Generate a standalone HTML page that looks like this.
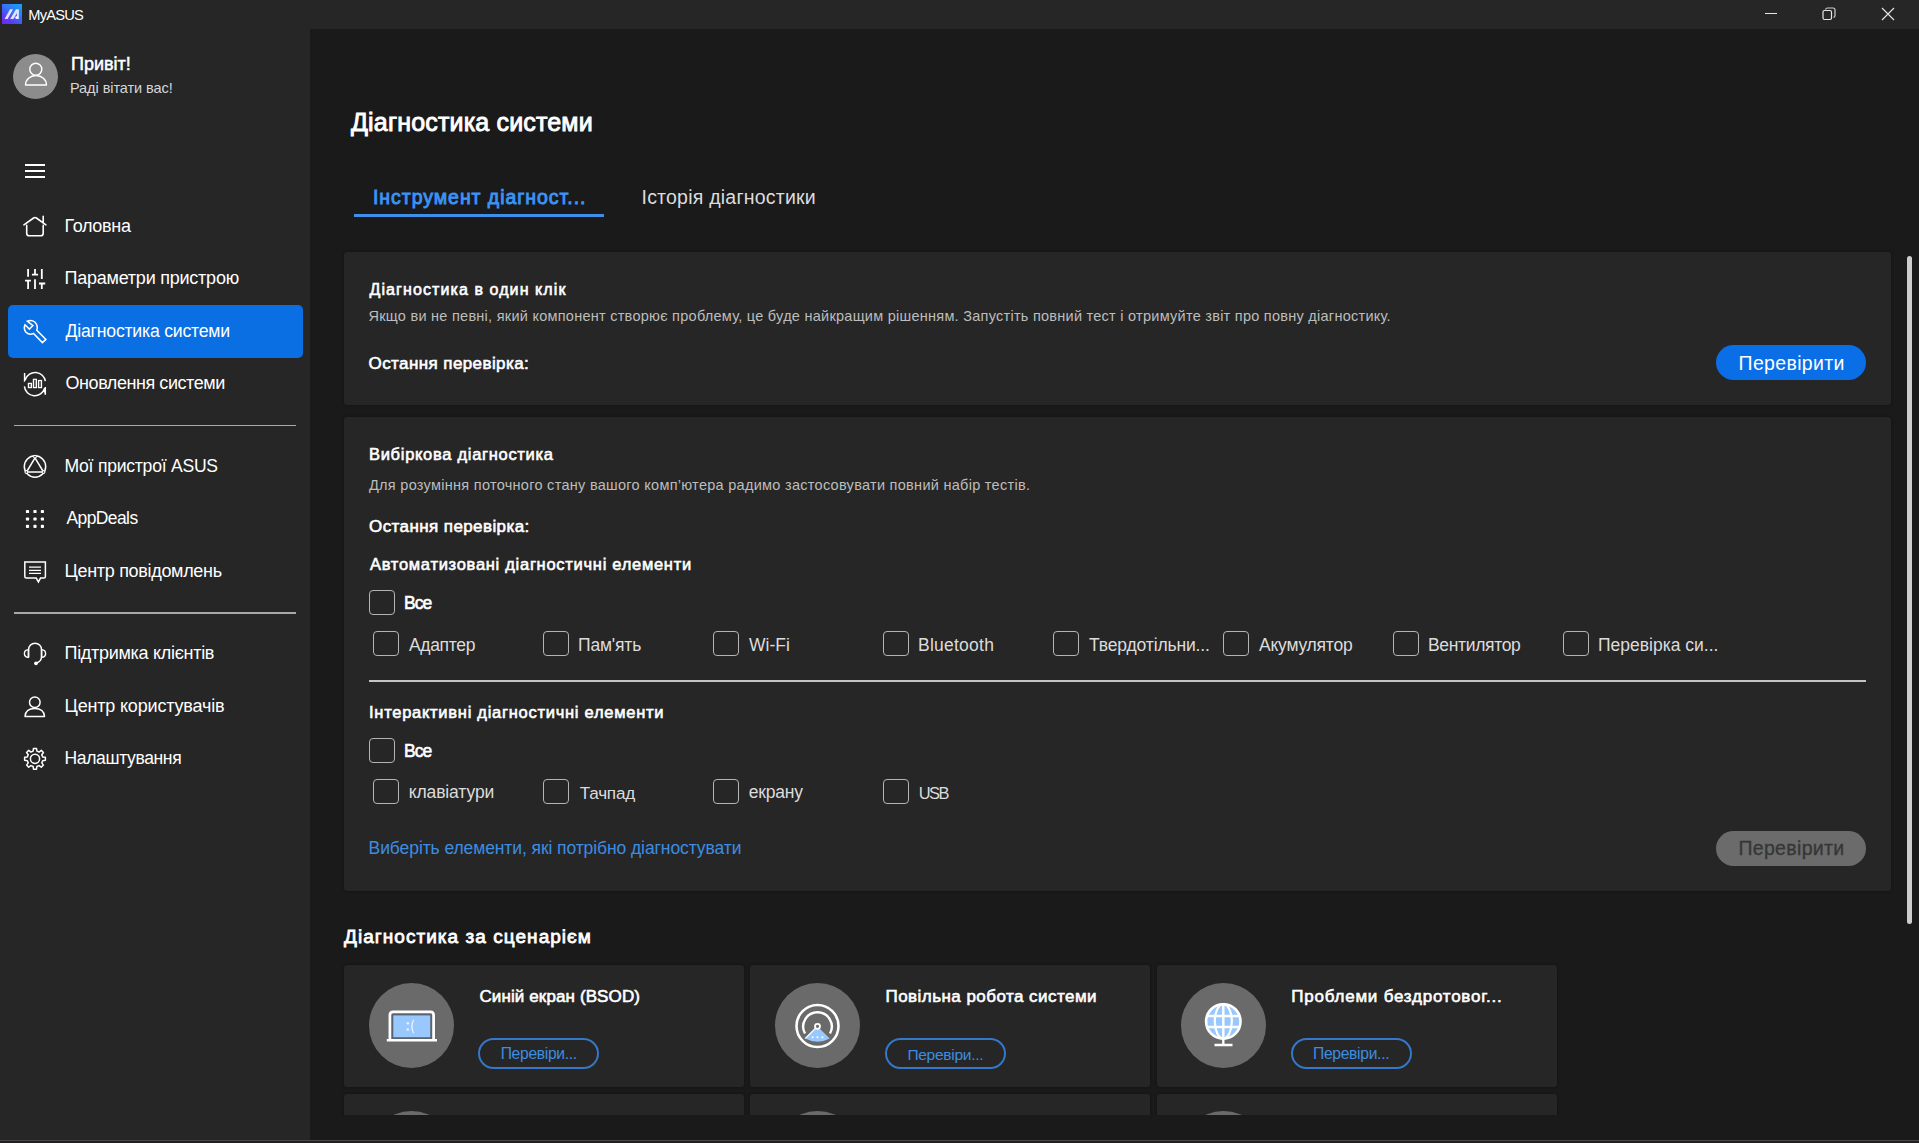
<!DOCTYPE html>
<html><head><meta charset="utf-8">
<style>
*{margin:0;padding:0;box-sizing:border-box}
html,body{width:1919px;height:1143px;overflow:hidden;background:#1a1a1a;font-family:"Liberation Sans",sans-serif}
.a{position:absolute}
.t{position:absolute;white-space:nowrap}
#titlebar{left:0;top:0;width:1919px;height:29px;background:#262626}
#sidebar{left:0;top:29px;width:310px;height:1111px;background:#262626}
#main{left:310px;top:29px;width:1609px;height:1111px;background:#1a1a1a}
#bottomline{left:0;top:1140px;width:1919px;height:1px;background:#484848}
#bottomdark{left:0;top:1141px;width:1919px;height:2px;background:#231f21}
.card{position:absolute;background:#262626;border-radius:3px;box-shadow:0 0 3px rgba(0,0,0,0.35)}
.sep{position:absolute;background:#bdbdbd}
.cb{position:absolute;width:25.5px;height:25px;border:1.8px solid #b4b4b4;border-radius:4px}
svg{position:absolute;overflow:visible}
</style></head><body>
<div class="a" id="titlebar"></div>
<div class="a" id="sidebar"></div>
<div class="a" id="main"></div>
<div class="a" id="bottomline"></div>
<div class="a" id="bottomdark"></div>

<!-- logo -->
<div class="a" style="left:2px;top:4px;width:20px;height:20px;background:linear-gradient(215deg,#12a6f7 0%,#3a6ef5 45%,#5a3cf2 75%,#7a1ff0 100%)"></div>
<svg style="left:2px;top:4px" width="20" height="20" viewBox="0 0 20 20">
  <defs><linearGradient id="lg" x1="0" y1="1" x2="1" y2="0"><stop offset="0" stop-color="#f0d8ff"/><stop offset="1" stop-color="#d8ecff"/></linearGradient></defs>
  <path d="M2.6 15 L5.6 15 L11 5.3 L8 5.3 Z" fill="url(#lg)"/>
  <path d="M8.2 15 L14 5.3 L16.9 5.3 L16.9 15 Z" fill="url(#lg)"/>
  <path d="M11.4 15 L14.9 9 L14.9 15 Z" fill="#4a55f3"/>
  <circle cx="14.6" cy="13.6" r="1.3" fill="#fff"/>
</svg>
<!-- window controls -->
<div class="a" style="left:1765px;top:13px;width:12px;height:1px;background:#e6e6e6"></div>
<svg style="left:1822px;top:7px" width="14" height="14" viewBox="0 0 14 14">
  <rect x="1" y="3.5" width="8.5" height="9" rx="1.5" fill="none" stroke="#e6e6e6" stroke-width="1.2"/>
  <path d="M3.5 2.5 Q3.8 1 5.5 1 L11 1 Q13 1 13 3 L13 8.5 Q13 10.2 11.5 10.5" fill="none" stroke="#cfcfcf" stroke-width="1.2"/>
</svg>
<svg style="left:1881px;top:7px" width="14" height="14" viewBox="0 0 14 14">
  <path d="M1 1 L13 13 M13 1 L1 13" stroke="#e6e6e6" stroke-width="1.1"/>
</svg>

<!-- avatar -->
<div class="a" style="left:12.5px;top:54px;width:45px;height:45px;border-radius:50%;background:#8c8c8c"></div>
<svg style="left:12.5px;top:54px" width="45" height="45" viewBox="0 0 45 45">
  <circle cx="22.8" cy="15.3" r="6" fill="none" stroke="#fff" stroke-width="1.4"/>
  <path d="M12.5 31 A10.5 9.5 0 0 1 33.5 31 Z" fill="none" stroke="#fff" stroke-width="1.4" stroke-linejoin="round"/>
</svg>

<!-- hamburger -->
<div class="a" style="left:25px;top:164px;width:20px;height:1.7px;background:#fff"></div>
<div class="a" style="left:25px;top:170px;width:20px;height:1.7px;background:#fff"></div>
<div class="a" style="left:25px;top:176px;width:20px;height:1.7px;background:#fff"></div>

<!-- selected nav -->
<div class="a" style="left:8px;top:305px;width:295px;height:53px;background:#0a6fe3;border-radius:5px"></div>

<!-- nav separators -->
<div class="sep" style="left:14px;top:424.5px;width:282px;height:1.5px;background:#a8a8a8"></div>
<div class="sep" style="left:14px;top:612px;width:282px;height:1.5px;background:#a8a8a8"></div>

<!-- nav icons -->
<svg style="left:20px;top:212px" width="30" height="30" viewBox="0 0 30 30">
  <path d="M3.9 12.9 L13.6 6 Q15 5 16.4 6 L25.9 12.9 M6.7 13.3 V21.2 Q6.7 23.75 9.2 23.75 H20.7 Q23.2 23.75 23.2 21.2 V13.3 M23.2 4.2 V9.9" fill="none" stroke="#fff" stroke-width="1.6" stroke-linecap="round"/>
</svg>
<svg style="left:20px;top:265px" width="30" height="30" viewBox="0 0 30 30">
  <path d="M8.1 3.9 V11.8 M5.1 15.7 H10.9 M8.1 15.7 V23.9 M15 3.9 V9.6 M11.9 9.6 H18.1 M15 14.2 V23.9 M21.8 3.9 V13.9 M19 18.5 H25.2 M21.8 18.5 V23.9" fill="none" stroke="#fff" stroke-width="1.8"/>
</svg>
<svg style="left:20px;top:316px" width="30" height="30" viewBox="0 0 30 30">
  <path d="M5 8.7 L9.4 13.1 L12.9 9.6 L7.3 5.2 Q11.5 3.6 15 6.2 Q18.3 9.6 16.8 14.4 L25.9 23.4 L22.4 26.6 L13.5 17.5 Q9.2 19.3 6 16.2 Q3.3 12.7 5 8.7 Z" fill="none" stroke="#fff" stroke-width="1.5" stroke-linejoin="miter"/>
</svg>
<svg style="left:20px;top:368px" width="30" height="30" viewBox="0 0 30 30">
  <path d="M4.6 5 V12.4 L5.6 11.2 M5.4 11.6 A10.3 10.3 0 0 1 25.4 13.2 M4.4 18.4 A10.3 10.3 0 0 0 24.6 20.2 M25.3 19 V26.7 L24.5 20.5" fill="none" stroke="#fff" stroke-width="1.5"/>
  <rect x="8.4" y="15.4" width="3" height="4.2" fill="#555" stroke="#fff" stroke-width="1.2"/>
  <rect x="13.4" y="11.3" width="3" height="8.3" fill="#555" stroke="#fff" stroke-width="1.2"/>
  <rect x="18.5" y="12.5" width="3" height="7.1" fill="#555" stroke="#fff" stroke-width="1.2"/>
</svg>
<svg style="left:20px;top:451px" width="30" height="30" viewBox="0 0 30 30">
  <circle cx="15" cy="15.5" r="10.7" fill="none" stroke="#fff" stroke-width="1.5"/>
  <path d="M15 6.8 L6.5 21 L23.5 21 Z" fill="none" stroke="#fff" stroke-width="1.5" stroke-linejoin="round"/>
  <circle cx="15" cy="5.6" r="1.4" fill="#262626" stroke="#fff" stroke-width="1.1"/>
  <circle cx="6.4" cy="21" r="1.4" fill="#262626" stroke="#fff" stroke-width="1.1"/>
  <circle cx="23.5" cy="21" r="1.4" fill="#262626" stroke="#fff" stroke-width="1.1"/>
</svg>
<svg style="left:20px;top:504px" width="30" height="30" viewBox="0 0 30 30"><g fill="#fff"><rect x="5.9" y="5.9" width="3.2" height="3.2" rx="0.9"/><rect x="13.4" y="5.9" width="3.2" height="3.2" rx="0.9"/><rect x="20.8" y="5.9" width="3.2" height="3.2" rx="0.9"/><rect x="5.9" y="13.4" width="3.2" height="3.2" rx="0.9"/><rect x="13.4" y="13.4" width="3.2" height="3.2" rx="0.9"/><rect x="20.8" y="13.4" width="3.2" height="3.2" rx="0.9"/><rect x="5.9" y="20.8" width="3.2" height="3.2" rx="0.9"/><rect x="13.4" y="20.8" width="3.2" height="3.2" rx="0.9"/><rect x="20.8" y="20.8" width="3.2" height="3.2" rx="0.9"/></g></svg>
<svg style="left:20px;top:557px" width="30" height="30" viewBox="0 0 30 30">
  <path d="M4.8 5 H25.4 V19.6 Q25.4 21.1 23.9 21.1 H20.5 L18.4 24.9 L16.2 21.1 H6.3 Q4.8 21.1 4.8 19.6 Z" fill="none" stroke="#fff" stroke-width="1.5" stroke-linejoin="miter"/>
  <path d="M9 10.2 H21 M9 13.3 H21 M9 16.4 H21" stroke="#fff" stroke-width="1.3"/>
</svg>
<svg style="left:20px;top:639px" width="30" height="30" viewBox="0 0 30 30">
  <path d="M8.6 18.4 V10.6 A6.4 6.4 0 0 1 21.5 10.6 V18.4" fill="none" stroke="#fff" stroke-width="1.5"/>
  <path d="M8.4 10.6 Q4.4 11 4.4 14.4 Q4.4 18 8.4 18.4 Z M21.6 10.6 Q25.6 11 25.6 14.4 Q25.6 18 21.6 18.4 Z" fill="none" stroke="#fff" stroke-width="1.4" stroke-linejoin="round"/>
  <path d="M21.5 18.4 Q21 22.6 16.5 24" fill="none" stroke="#fff" stroke-width="1.4"/>
  <circle cx="16" cy="24.3" r="1.9" fill="#fff"/>
</svg>
<svg style="left:24px;top:696px" width="22" height="22" viewBox="0 0 22 22">
  <circle cx="10.8" cy="6.2" r="5.3" fill="none" stroke="#fff" stroke-width="1.5"/>
  <path d="M1 20.5 Q1.5 12.5 10.8 12.5 Q20 12.5 20.5 20.5 Z" fill="none" stroke="#fff" stroke-width="1.5" stroke-linejoin="round"/>
</svg>
<svg style="left:20px;top:744px" width="30" height="30" viewBox="0 0 30 30">
  <path d="M13.10 7.13 L13.50 4.41 L16.50 4.41 L16.90 7.13 L19.08 8.03 L21.29 6.39 L23.41 8.51 L21.77 10.72 L22.67 12.90 L25.39 13.30 L25.39 16.30 L22.67 16.70 L21.77 18.88 L23.41 21.09 L21.29 23.21 L19.08 21.57 L16.90 22.47 L16.50 25.19 L13.50 25.19 L13.10 22.47 L10.92 21.57 L8.71 23.21 L6.59 21.09 L8.23 18.88 L7.33 16.70 L4.61 16.30 L4.61 13.30 L7.33 12.90 L8.23 10.72 L6.59 8.51 L8.71 6.39 L10.92 8.03 Z" fill="none" stroke="#fff" stroke-width="1.5" stroke-linejoin="round"/>
  <circle cx="15" cy="14.8" r="4.6" fill="none" stroke="#fff" stroke-width="1.5"/>
</svg>

<!-- tabs underline -->
<div class="a" style="left:354px;top:214px;width:250px;height:3px;background:#3d8fe9"></div>

<!-- card 1 -->
<div class="card" style="left:344px;top:252px;width:1547px;height:153px"></div>
<div class="a" style="left:1716px;top:345px;width:150px;height:35px;border-radius:18px;background:#0a6fe6"></div>

<!-- card 2 -->
<div class="card" style="left:344px;top:417px;width:1547px;height:474px"></div>
<div class="cb" style="left:369px;top:590px"></div>
<div class="cb" style="left:373px;top:631px"></div>
<div class="cb" style="left:543px;top:631px"></div>
<div class="cb" style="left:713px;top:631px"></div>
<div class="cb" style="left:883px;top:631px"></div>
<div class="cb" style="left:1053px;top:631px"></div>
<div class="cb" style="left:1223px;top:631px"></div>
<div class="cb" style="left:1393px;top:631px"></div>
<div class="cb" style="left:1563px;top:631px"></div>
<div class="sep" style="left:369px;top:680px;width:1497px;height:2px;background:#c4c4c4"></div>
<div class="cb" style="left:369px;top:738px"></div>
<div class="cb" style="left:373px;top:779px"></div>
<div class="cb" style="left:543px;top:779px"></div>
<div class="cb" style="left:713px;top:779px"></div>
<div class="cb" style="left:883px;top:779px"></div>
<div class="a" style="left:1716px;top:830.5px;width:150px;height:35px;border-radius:18px;background:#6b6b6b"></div>

<!-- scrollbar -->
<div class="a" style="left:1907px;top:256px;width:5px;height:668px;border-radius:3px;background:#cdcdcd"></div>

<!-- scenario cards -->
<div class="a" style="left:310px;top:959.5px;width:1609px;height:155.3px;overflow:hidden">
  <div class="card" style="left:33.7px;top:5px;width:400px;height:122px"></div>
  <div class="card" style="left:440.3px;top:5px;width:400px;height:122px"></div>
  <div class="card" style="left:846.7px;top:5px;width:400px;height:122px"></div>
  <div class="card" style="left:33.7px;top:134px;width:400px;height:122px"></div>
  <div class="card" style="left:440.3px;top:134px;width:400px;height:122px"></div>
  <div class="card" style="left:846.7px;top:134px;width:400px;height:122px"></div>
  <div class="a" style="left:58.7px;top:151.5px;width:85px;height:85px;border-radius:50%;background:#6a6a6a"></div>
  <div class="a" style="left:465px;top:151.5px;width:85px;height:85px;border-radius:50%;background:#6a6a6a"></div>
  <div class="a" style="left:871.4px;top:151.5px;width:85px;height:85px;border-radius:50%;background:#6a6a6a"></div>
</div>
<!-- icon circles row1 -->
<div class="a" style="left:368.7px;top:983px;width:85px;height:85px;border-radius:50%;background:#6a6a6a"></div>
<div class="a" style="left:775px;top:983px;width:85px;height:85px;border-radius:50%;background:#6a6a6a"></div>
<div class="a" style="left:1181.4px;top:983px;width:85px;height:85px;border-radius:50%;background:#6a6a6a"></div>
<!-- outline buttons -->
<div class="a" style="left:478.2px;top:1038.3px;width:121px;height:30.5px;border-radius:16px;border:2px solid #3577c9"></div>
<div class="a" style="left:884.5px;top:1038.3px;width:121px;height:30.5px;border-radius:16px;border:2px solid #3577c9"></div>
<div class="a" style="left:1290.9px;top:1038.3px;width:121px;height:30.5px;border-radius:16px;border:2px solid #3577c9"></div>

<!-- BSOD laptop icon -->
<svg style="left:368.7px;top:983px" width="85" height="85" viewBox="0 0 85 85">
  <rect x="22.5" y="30.5" width="40.5" height="25.5" fill="#5a6470"/>
  <rect x="24.3" y="32.4" width="36.9" height="21.8" fill="#99c8ff"/>
  <path d="M20.9 56 L20.9 32 Q20.9 28.8 24 28.8 L61.5 28.8 Q64.6 28.8 64.6 32 L64.6 56" fill="none" stroke="#fff" stroke-width="2.7"/>
  <path d="M17.8 57.3 L68 57.3" stroke="#fff" stroke-width="2.6"/>
  <circle cx="38.8" cy="40.2" r="1.25" fill="#e4f2ff"/><circle cx="38.8" cy="46.6" r="1.25" fill="#e4f2ff"/>
  <path d="M44.6 36.8 Q41.2 43.5 44.6 50.2" fill="none" stroke="#e4f2ff" stroke-width="1.4"/>
</svg>
<!-- speedometer icon -->
<svg style="left:775px;top:983px" width="85" height="85" viewBox="0 0 85 85">
  <circle cx="42.5" cy="43" r="21" fill="none" stroke="#fff" stroke-width="2.6"/>
  <path d="M30.5 33.5 L42.5 43 L54.5 33.5" fill="none" stroke="none"/>
  <path d="M30.3 55.5 L42.5 43.5 L54.7 55.5 Q42.5 62 30.3 55.5 Z" fill="#99c8ff"/>
  <path d="M30.3 55.5 L40.8 45" stroke="#fff" stroke-width="1.3"/>
  <path d="M30 50.5 A14.3 14.3 0 1 1 55 50.5" fill="none" stroke="#fff" stroke-width="2.4"/>
  <circle cx="42.5" cy="43.3" r="2.5" fill="#6a6a6a" stroke="#fff" stroke-width="1.8"/>
  <circle cx="37.6" cy="54.2" r="1" fill="#fff"/><circle cx="42.5" cy="54.2" r="1" fill="#fff"/><circle cx="47.4" cy="54.2" r="1" fill="#fff"/>
</svg>
<!-- globe icon -->
<svg style="left:1181.4px;top:983px" width="85" height="85" viewBox="0 0 85 85">
  <circle cx="42.3" cy="38.4" r="17.2" fill="#99c8ff" stroke="#fff" stroke-width="2.6"/>
  <ellipse cx="42.3" cy="38.4" rx="8.5" ry="17.2" fill="none" stroke="#fff" stroke-width="2.2"/>
  <path d="M42.3 21.2 L42.3 62 M25.5 33 L59 33 M25.5 44 L59 44 M33.5 62 L51.5 62" fill="none" stroke="#fff" stroke-width="2.4"/>
</svg>

<div class="t" id="t0" style="left:28.30px;top:7.57px;font-size:14.68px;line-height:14.68px;font-weight:400;color:#ffffff;letter-spacing:-0.800px">MyASUS</div>
<div class="t" id="t1" style="left:71.00px;top:55.46px;font-size:18px;line-height:18px;font-weight:400;color:#ffffff;letter-spacing:0.000px;-webkit-text-stroke:0.5px #ffffff">Привіт!</div>
<div class="t" id="t2" style="left:70.00px;top:80.72px;font-size:14.5px;line-height:14.5px;font-weight:400;color:#d6d6d6;letter-spacing:-0.067px">Раді вітати вас!</div>
<div class="t" id="t3" style="left:64.50px;top:216.66px;font-size:18px;line-height:18px;font-weight:400;color:#ffffff;letter-spacing:-0.333px">Головна</div>
<div class="t" id="t4" style="left:64.50px;top:268.76px;font-size:18px;line-height:18px;font-weight:400;color:#ffffff;letter-spacing:-0.235px">Параметри пристрою</div>
<div class="t" id="t5" style="left:65.50px;top:323.05px;font-size:17.66px;line-height:17.66px;font-weight:400;color:#ffffff;letter-spacing:-0.222px">Діагностика системи</div>
<div class="t" id="t6" style="left:65.50px;top:373.86px;font-size:18px;line-height:18px;font-weight:400;color:#ffffff;letter-spacing:-0.438px">Оновлення системи</div>
<div class="t" id="t7" style="left:64.50px;top:458.11px;font-size:17.59px;line-height:17.59px;font-weight:400;color:#ffffff;letter-spacing:-0.246px">Мої пристрої ASUS</div>
<div class="t" id="t8" style="left:66.50px;top:510.13px;font-size:17.44px;line-height:17.44px;font-weight:400;color:#ffffff;letter-spacing:-0.572px">AppDeals</div>
<div class="t" id="t9" style="left:64.50px;top:561.56px;font-size:18px;line-height:18px;font-weight:400;color:#ffffff;letter-spacing:-0.312px">Центр повідомлень</div>
<div class="t" id="t10" style="left:64.50px;top:643.76px;font-size:18px;line-height:18px;font-weight:400;color:#ffffff;letter-spacing:-0.294px">Підтримка клієнтів</div>
<div class="t" id="t11" style="left:64.50px;top:696.56px;font-size:18px;line-height:18px;font-weight:400;color:#ffffff;letter-spacing:-0.176px">Центр користувачів</div>
<div class="t" id="t12" style="left:64.50px;top:750.44px;font-size:17.55px;line-height:17.55px;font-weight:400;color:#ffffff;letter-spacing:-0.364px">Налаштування</div>
<div class="t" id="t13" style="left:351.00px;top:109.83px;font-size:25px;line-height:25px;font-weight:400;color:#ffffff;letter-spacing:0.167px;-webkit-text-stroke:0.9px #ffffff">Діагностика системи</div>
<div class="t" id="t14" style="left:373.00px;top:187.69px;font-size:19.5px;line-height:19.5px;font-weight:400;color:#3a93f5;letter-spacing:0.952px;-webkit-text-stroke:0.9px #3a93f5">Інструмент діагност...</div>
<div class="t" id="t15" style="left:641.50px;top:187.89px;font-size:19.5px;line-height:19.5px;font-weight:400;color:#dcdcdc;letter-spacing:0.222px">Історія діагностики</div>
<div class="t" id="t16" style="left:369.50px;top:281.75px;font-size:16px;line-height:16px;font-weight:400;color:#ffffff;letter-spacing:1.091px;-webkit-text-stroke:0.6px #ffffff">Діагностика в один клік</div>
<div class="t" id="t17" style="left:368.50px;top:309.02px;font-size:14.5px;line-height:14.5px;font-weight:400;color:#bdbdbd;letter-spacing:0.259px">Якщо ви не певні, який компонент створює проблему, це буде найкращим рішенням. Запустіть повний тест і отримуйте звіт про повну діагностику.</div>
<div class="t" id="t18" style="left:368.50px;top:355.01px;font-size:17px;line-height:17px;font-weight:400;color:#ffffff;letter-spacing:0.412px;-webkit-text-stroke:0.6px #ffffff">Остання перевірка:</div>
<div class="t" id="t19" style="left:1738.60px;top:354.09px;font-size:19.5px;line-height:19.5px;font-weight:400;color:#ffffff;letter-spacing:0.333px">Перевірити</div>
<div class="t" id="t20" style="left:369.00px;top:446.33px;font-size:16.5px;line-height:16.5px;font-weight:400;color:#ffffff;letter-spacing:0.700px;-webkit-text-stroke:0.6px #ffffff">Вибіркова діагностика</div>
<div class="t" id="t21" style="left:369.00px;top:478.02px;font-size:14.5px;line-height:14.5px;font-weight:400;color:#bdbdbd;letter-spacing:0.284px">Для розуміння поточного стану вашого комп’ютера радимо застосовувати повний набір тестів.</div>
<div class="t" id="t22" style="left:369.00px;top:518.11px;font-size:17px;line-height:17px;font-weight:400;color:#ffffff;letter-spacing:0.412px;-webkit-text-stroke:0.6px #ffffff">Остання перевірка:</div>
<div class="t" id="t23" style="left:370.00px;top:556.03px;font-size:16.5px;line-height:16.5px;font-weight:400;color:#ffffff;letter-spacing:0.714px;-webkit-text-stroke:0.6px #ffffff">Автоматизовані діагностичні елементи</div>
<div class="t" id="t24" style="left:404.00px;top:594.98px;font-size:17.5px;line-height:17.5px;font-weight:400;color:#ffffff;letter-spacing:-1.000px;-webkit-text-stroke:0.6px #ffffff">Все</div>
<div class="t" id="t25" style="left:409.00px;top:637.43px;font-size:17.5px;line-height:17.5px;font-weight:400;color:#dcdcdc;letter-spacing:-0.333px">Адаптер</div>
<div class="t" id="t26" style="left:578.00px;top:637.43px;font-size:17.5px;line-height:17.5px;font-weight:400;color:#dcdcdc;letter-spacing:-0.167px">Пам'ять</div>
<div class="t" id="t27" style="left:749.00px;top:637.43px;font-size:17.5px;line-height:17.5px;font-weight:400;color:#dcdcdc;letter-spacing:0.000px">Wi-Fi</div>
<div class="t" id="t28" style="left:918.00px;top:637.43px;font-size:17.5px;line-height:17.5px;font-weight:400;color:#dcdcdc;letter-spacing:0.246px">Bluetooth</div>
<div class="t" id="t29" style="left:1089.00px;top:637.43px;font-size:17.5px;line-height:17.5px;font-weight:400;color:#dcdcdc;letter-spacing:-0.143px">Твердотільни...</div>
<div class="t" id="t30" style="left:1259.00px;top:637.43px;font-size:17.5px;line-height:17.5px;font-weight:400;color:#dcdcdc;letter-spacing:-0.222px">Акумулятор</div>
<div class="t" id="t31" style="left:1428.00px;top:637.43px;font-size:17.5px;line-height:17.5px;font-weight:400;color:#dcdcdc;letter-spacing:-0.333px">Вентилятор</div>
<div class="t" id="t32" style="left:1598.00px;top:637.43px;font-size:17.5px;line-height:17.5px;font-weight:400;color:#dcdcdc;letter-spacing:0.000px">Перевірка си...</div>
<div class="t" id="t33" style="left:369.00px;top:704.03px;font-size:16.5px;line-height:16.5px;font-weight:400;color:#ffffff;letter-spacing:0.727px;-webkit-text-stroke:0.6px #ffffff">Інтерактивні діагностичні елементи</div>
<div class="t" id="t34" style="left:404.00px;top:743.18px;font-size:17.5px;line-height:17.5px;font-weight:400;color:#ffffff;letter-spacing:-1.000px;-webkit-text-stroke:0.6px #ffffff">Все</div>
<div class="t" id="t35" style="left:408.70px;top:784.38px;font-size:17.5px;line-height:17.5px;font-weight:400;color:#dcdcdc;letter-spacing:-0.112px">клавіатури</div>
<div class="t" id="t36" style="left:579.70px;top:784.69px;font-size:17.14px;line-height:17.14px;font-weight:400;color:#dcdcdc;letter-spacing:-0.200px">Тачпад</div>
<div class="t" id="t37" style="left:748.70px;top:784.38px;font-size:17.5px;line-height:17.5px;font-weight:400;color:#dcdcdc;letter-spacing:-0.200px">екрану</div>
<div class="t" id="t38" style="left:918.70px;top:785.27px;font-size:16.45px;line-height:16.45px;font-weight:400;color:#dcdcdc;letter-spacing:-1.500px">USB</div>
<div class="t" id="t39" style="left:368.60px;top:840.18px;font-size:17.5px;line-height:17.5px;font-weight:400;color:#3c8de2;letter-spacing:-0.091px">Виберіть елементи, які потрібно діагностувати</div>
<div class="t" id="t40" style="left:1738.40px;top:839.49px;font-size:19.5px;line-height:19.5px;font-weight:400;color:#363636;letter-spacing:0.333px;-webkit-text-stroke:0.3px #363636">Перевірити</div>
<div class="t" id="t41" style="left:344.00px;top:926.91px;font-size:19px;line-height:19px;font-weight:400;color:#ffffff;letter-spacing:1.043px;-webkit-text-stroke:0.8px #ffffff">Діагностика за сценарієм</div>
<div class="t" id="t42" style="left:479.40px;top:987.81px;font-size:17px;line-height:17px;font-weight:400;color:#ffffff;letter-spacing:0.118px;-webkit-text-stroke:0.6px #ffffff">Синій екран (BSOD)</div>
<div class="t" id="t43" style="left:500.70px;top:1046.47px;font-size:15.63px;line-height:15.63px;font-weight:400;color:#3c8de2;letter-spacing:-0.300px">Перевіри...</div>
<div class="t" id="t44" style="left:885.50px;top:987.81px;font-size:17px;line-height:17px;font-weight:400;color:#ffffff;letter-spacing:0.455px;-webkit-text-stroke:0.6px #ffffff">Повільна робота системи</div>
<div class="t" id="t45" style="left:907.40px;top:1046.53px;font-size:15.55px;line-height:15.55px;font-weight:400;color:#3c8de2;letter-spacing:-0.300px">Перевіри...</div>
<div class="t" id="t46" style="left:1291.30px;top:987.81px;font-size:17px;line-height:17px;font-weight:400;color:#ffffff;letter-spacing:0.772px;-webkit-text-stroke:0.6px #ffffff">Проблеми бездротовог...</div>
<div class="t" id="t47" style="left:1313.00px;top:1046.47px;font-size:15.63px;line-height:15.63px;font-weight:400;color:#3c8de2;letter-spacing:-0.300px">Перевіри...</div>
</body></html>
